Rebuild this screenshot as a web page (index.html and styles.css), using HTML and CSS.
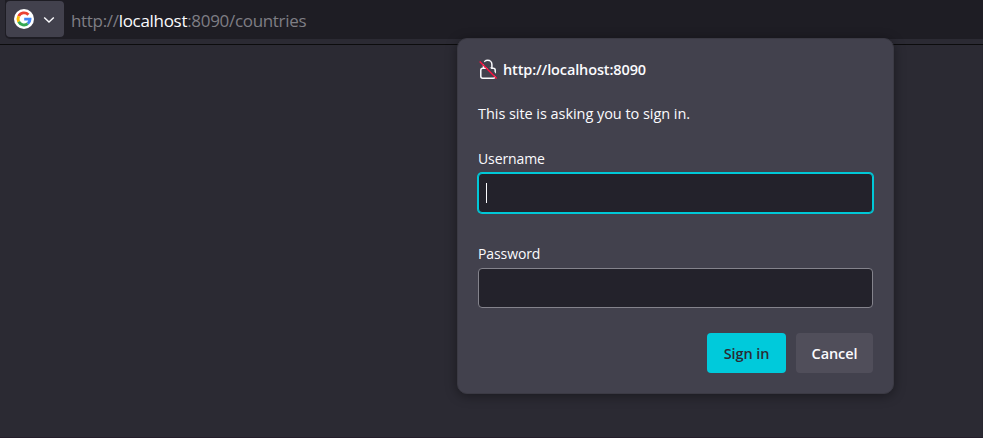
FILE: index.html
```html
<!DOCTYPE html>
<html lang="en">
<head>
<meta charset="utf-8">
<title>Sign in</title>
<link rel="stylesheet" href="styles.css">
</head>
<body>
<header class="toolbar">
  <div class="urlbar">
    <button class="engine" aria-label="Search engine">
      <svg class="google" width="20" height="20" viewBox="0 0 20 20">
        <circle cx="10" cy="10" r="10" fill="#fff"/>
        <g fill="none" stroke-width="2.9">
          <path d="M14.4 5.7A6 6 0 0 0 4.7 7.2" stroke="#ea4335"/>
          <path d="M4.7 7.2A6 6 0 0 0 4.7 12.8" stroke="#fbbc05"/>
          <path d="M4.7 12.8A6 6 0 0 0 13.8 14.6" stroke="#34a853"/>
          <path d="M13.8 14.6A6 6 0 0 0 16 10.1H10.2" stroke="#4285f4"/>
        </g>
      </svg>
      <svg class="chevron" width="12" height="8" viewBox="0 0 12 8"><path d="M1.2 1.4L6 6.1L10.8 1.4" fill="none" stroke="#fbfbfe" stroke-width="1.4"/></svg>
    </button>
    <div class="url">http://<span class="host">localhost</span>:8090/countries</div>
  </div>
</header>
<main class="page"></main>
<form class="dialog">
  <div class="origin">
    <svg width="20" height="22" viewBox="0 0 20 22">
      <g fill="none" stroke="#fbfbfe" stroke-width="1.5">
        <path d="M5.5 10.5V6.4a4.2 4.2 0 0 1 8.4 0V10.5"/>
        <rect x="2.8" y="10.3" width="14.4" height="9.9" rx="2"/>
      </g>
      <path d="M3.4 2.7L19.6 19" stroke="#42414d" stroke-width="2.4"/>
      <path d="M1.7 3.5L18.7 20.5" stroke="#ff0f3f" stroke-width="1.4"/>
    </svg>
    <strong class="site">http://localhost:8090</strong>
  </div>
  <p class="message">This site is asking you to sign in.</p>
  <label class="label user-label">Username</label>
  <div class="field focused"><span class="caret"></span></div>
  <label class="label pass-label">Password</label>
  <div class="field"></div>
  <div class="actions">
    <button type="button" class="btn primary">Sign in</button>
    <button type="button" class="btn cancel">Cancel</button>
  </div>
</form>
</body>
</html>
```
FILE: styles.css
```css
* { box-sizing: border-box; }
body {
  margin: 0;
  height: 438px;
  overflow: hidden;
  display: flex;
  flex-direction: column;
  background: #2b2a33;
  color: #fbfbfe;
  font-family: "Open Sans", "Noto Sans", sans-serif;
  font-size: 14px;
}
button { border: 0; padding: 0; font: inherit; color: inherit; }
.toolbar { height: 45px; padding-left: 5px; border-bottom: 1px solid #0c0c0d; background: #2b2a33; }
.urlbar {
  display: flex;
  height: 39px;
  padding: 1px 0 0 1px;
  border-bottom-left-radius: 5px;
  background: #1e1d24;
}
.engine {
  display: flex;
  align-items: center;
  width: 58px;
  height: 36px;
  padding-left: 8px;
  border-radius: 4px;
  background: #42414d;
}
.chevron { margin: 2px 0 0 9px; }
.url {
  margin-left: 7px;
  font-size: 17px;
  line-height: 40px;
  letter-spacing: -0.31px;
  color: #7f7e84;
  white-space: nowrap;
}
.host { color: #fbfbfe; }
.page { flex: 1; border-bottom: 1px solid #251e2b; border-right: 1px solid #282730; }
.dialog {
  position: absolute;
  left: 457px;
  top: 38px;
  width: 437px;
  height: 356px;
  padding: 19px 20px 20px;
  border: 1px solid #3b3a44;
  border-radius: 10px;
  background: #42414d;
  box-shadow: 0 2px 12px rgba(0, 0, 0, 0.4);
}
.origin { display: flex; align-items: center; height: 22px; gap: 5px; }
.site { font-size: 14.5px; font-weight: 600; letter-spacing: -0.12px; }
.message { margin: 24px 0 0; font-size: 14.5px; line-height: 20px; letter-spacing: -0.05px; }
.label { display: block; height: 20px; line-height: 20px; letter-spacing: -0.1px; }
.user-label { margin-top: 25px; }
.pass-label { margin-top: 31px; }
.field {
  height: 40px;
  margin-top: 4px;
  border: 1px solid #84838c;
  border-radius: 4px;
  background: #23222b;
}
.focused { border-color: #00c8d7; box-shadow: 0 0 0 1px #00c8d7; padding: 9px 7px; }
.caret { display: block; width: 1px; height: 20px; background: #fbfbfe; }
.actions { display: flex; justify-content: flex-end; gap: 10px; margin-top: 25px; }
.btn { height: 40px; border-radius: 4px; font-size: 14.5px; font-weight: 600; letter-spacing: -0.1px; }
.primary { width: 79px; background: #00cadb; color: #2b2a33; }
.cancel { width: 77px; background: #504e5a; }
```
